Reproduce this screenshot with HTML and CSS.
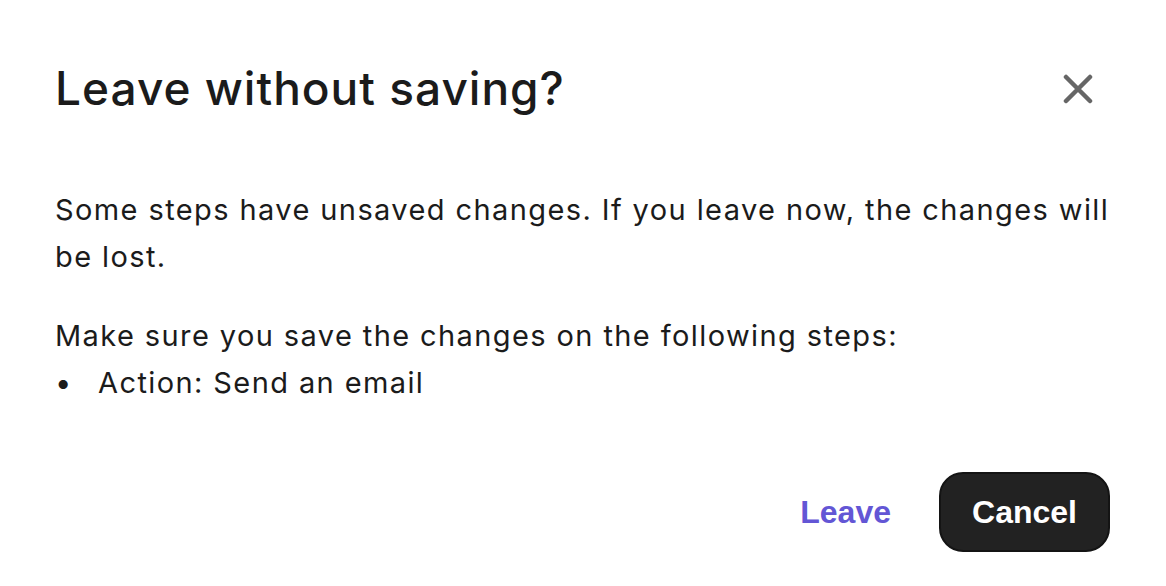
FILE: index.html
```html
<!DOCTYPE html>
<html lang="en">
<head>
<meta charset="utf-8">
<title>Leave without saving?</title>
<link rel="stylesheet" href="styles.css">
</head>
<body>
<div class="dialog" role="dialog" aria-labelledby="dlg-title">
  <div class="dialog-header">
    <h1 id="dlg-title" class="dialog-title">Leave without saving?</h1>
    <button class="close-btn" aria-label="Close">
      <svg width="30" height="30" viewBox="0 0 30 30" aria-hidden="true">
        <path d="M3 3 L27 27 M27 3 L3 27" stroke="#666666" stroke-width="4.5" stroke-linecap="round" fill="none"/>
      </svg>
    </button>
  </div>
  <div class="dialog-body">
    <p class="text">Some steps have unsaved changes. If you leave now, the changes will be lost.</p>
    <p class="text spaced">Make sure you save the changes on the following steps:</p>
    <ul class="steps">
      <li class="step">Action: Send an email</li>
    </ul>
  </div>
  <div class="dialog-footer">
    <button class="btn btn-link">Leave</button>
    <button class="btn btn-dark">Cancel</button>
  </div>
</div>
</body>
</html>
```

FILE: styles.css
```css
html, body {
  margin: 0;
  padding: 0;
  background: #ffffff;
}

.dialog {
  box-sizing: border-box;
  width: 1166px;
  height: 586px;
  padding: 60px 56px 34px 55px;
  display: flex;
  flex-direction: column;
  background: #ffffff;
  color: #1b1b1b;
  font-family: Inter, "Noto Sans", sans-serif;
}

.dialog-header {
  display: flex;
  align-items: center;
  justify-content: space-between;
  height: 56px;
}

.dialog-title {
  margin: 0;
  font-family: Inter, "Noto Sans", sans-serif;
  font-weight: 500;
  font-size: 46px;
  line-height: 56px;
  letter-spacing: 1px;
  color: #1b1b1b;
}

.close-btn {
  width: 40px;
  height: 40px;
  margin-right: 12px;
  margin-top: 2px;
  padding: 0;
  border: none;
  background: transparent;
  display: flex;
  align-items: center;
  justify-content: center;
  cursor: pointer;
}

.dialog-body {
  margin-top: 70px;
  flex: 1;
}

.text {
  margin: 0;
  font-size: 29px;
  line-height: 47px;
  letter-spacing: 1.4px;
  color: #1b1b1b;
}

.text.spaced {
  margin-top: 32px;
}

.steps {
  margin: 0;
  padding: 0;
  list-style: none;
  font-size: 29px;
  line-height: 47px;
  letter-spacing: 1.4px;
}

.step {
  display: flex;
}

.step::before {
  content: "\2022";
  width: 43px;
  flex: none;
}

.dialog-footer {
  display: flex;
  justify-content: flex-end;
  align-items: center;
  gap: 24px;
}

.btn {
  height: 80px;
  border: none;
  font-family: "Liberation Sans", Arial, sans-serif;
  font-weight: 700;
  font-size: 32px;
  cursor: pointer;
}

.btn-link {
  background: transparent;
  color: #6356d5;
  padding: 0 24px;
}

.btn-dark {
  background: #222222;
  color: #ffffff;
  border: 2px solid #141414;
  border-radius: 24px;
  padding: 0 31px;
  width: 171px;
}
```
